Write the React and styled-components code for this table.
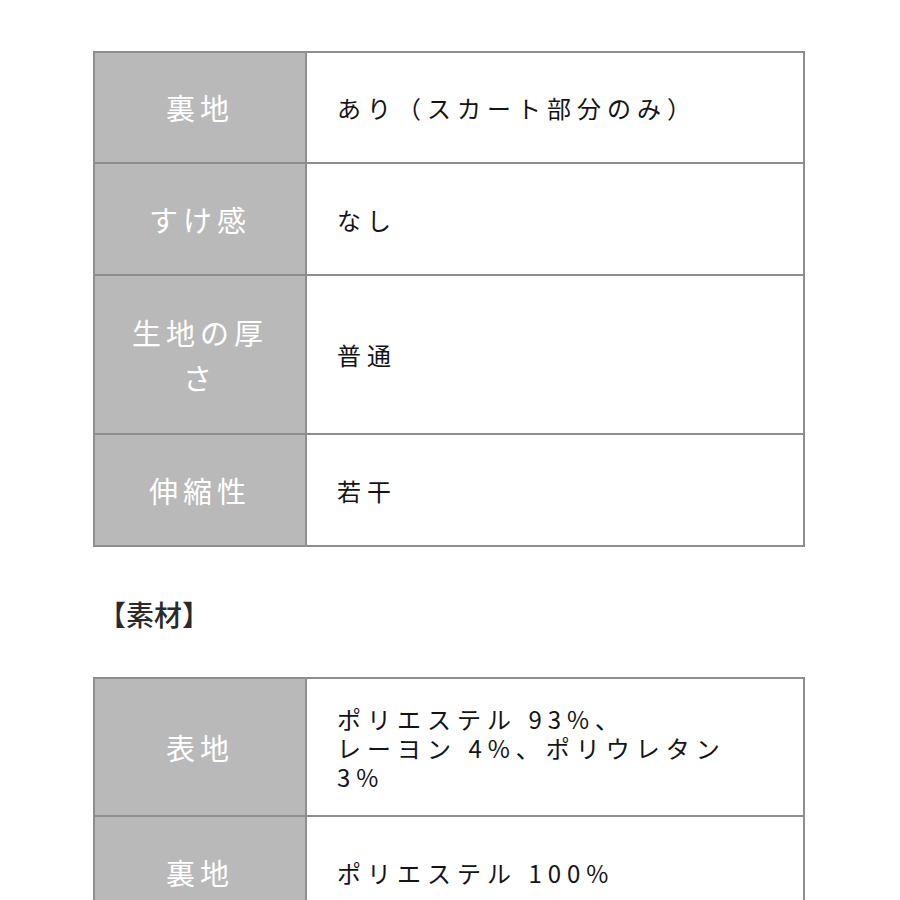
import React from "react";
import styled, { createGlobalStyle } from "styled-components";

const GlobalStyle = createGlobalStyle`
  html, body {
    margin: 0;
    padding: 0;
    background: #ffffff;
  }
  body {
    font-family: "Noto Sans CJK JP", "Noto Sans", sans-serif;
    color: #222222;
  }
`;

const Page = styled.div`
  width: 900px;
  height: 900px;
  overflow: hidden;
  padding: 0 95px 0 93px;
  box-sizing: border-box;
`;

const Section = styled.section`
  display: flex;
  flex-direction: column;
  gap: ${props => props.$gap ?? 51}px;
  margin-top: ${props => props.$offset ?? 55}px;
`;

const Heading = styled.h3`
  margin: 0 0 0 5px;
  height: 24px;
  line-height: 24px;
  font-size: 28px;
  font-weight: 500;
  color: #2a2a2a;
`;

const SpecTable = styled.table`
  width: 712px;
  border-collapse: collapse;
  table-layout: fixed;
`;

const Row = styled.tr`
  height: ${props => props.$h}px;
`;

const Label = styled.th`
  width: 212px;
  box-sizing: border-box;
  padding: 0 25px;
  background: #b9b9b9;
  border: 2px solid #8e8e8e;
  color: #ffffff;
  font-size: 29px;
  font-weight: 400;
  line-height: 45px;
  letter-spacing: 5px;
  text-align: center;
  vertical-align: middle;
`;

const Value = styled.td`
  padding: 0 20px 0 30px;
  background: #ffffff;
  border: 2px solid #8e8e8e;
  color: #141414;
  font-size: 24px;
  font-weight: 400;
  line-height: 29px;
  letter-spacing: 6px;
  text-align: left;
  vertical-align: middle;
`;

const details = [
  { label: "裏地", value: "あり（スカート部分のみ）", h: 111 },
  { label: "すけ感", value: "なし", h: 112 },
  { label: "生地の厚さ", value: "普通", h: 159 },
  { label: "伸縮性", value: "若干", h: 112 },
];

const materials = [
  { label: "表地", value: ["ポリエステル 93%、", "レーヨン 4%、ポリウレタン", "3%"], h: 138 },
  { label: "裏地", value: ["ポリエステル 100%"], h: 112 },
];

function Lines({ value }) {
  const lines = Array.isArray(value) ? value : [value];
  return lines.map((line, i) => (
    <React.Fragment key={i}>
      {i > 0 && <br />}
      {line}
    </React.Fragment>
  ));
}

function Spec({ rows }) {
  return (
    <SpecTable>
      <tbody>
        {rows.map(row => (
          <Row key={row.label} $h={row.h}>
            <Label>{row.label}</Label>
            <Value><Lines value={row.value} /></Value>
          </Row>
        ))}
      </tbody>
    </SpecTable>
  );
}

export default function App() {
  return (
    <>
      <GlobalStyle />
      <Page>
        <Section $offset={-28} $gap={55}>
          <Heading>【生地の特徴】</Heading>
          <Spec rows={details} />
        </Section>
        <Section>
          <Heading>【素材】</Heading>
          <Spec rows={materials} />
        </Section>
      </Page>
    </>
  );
}
